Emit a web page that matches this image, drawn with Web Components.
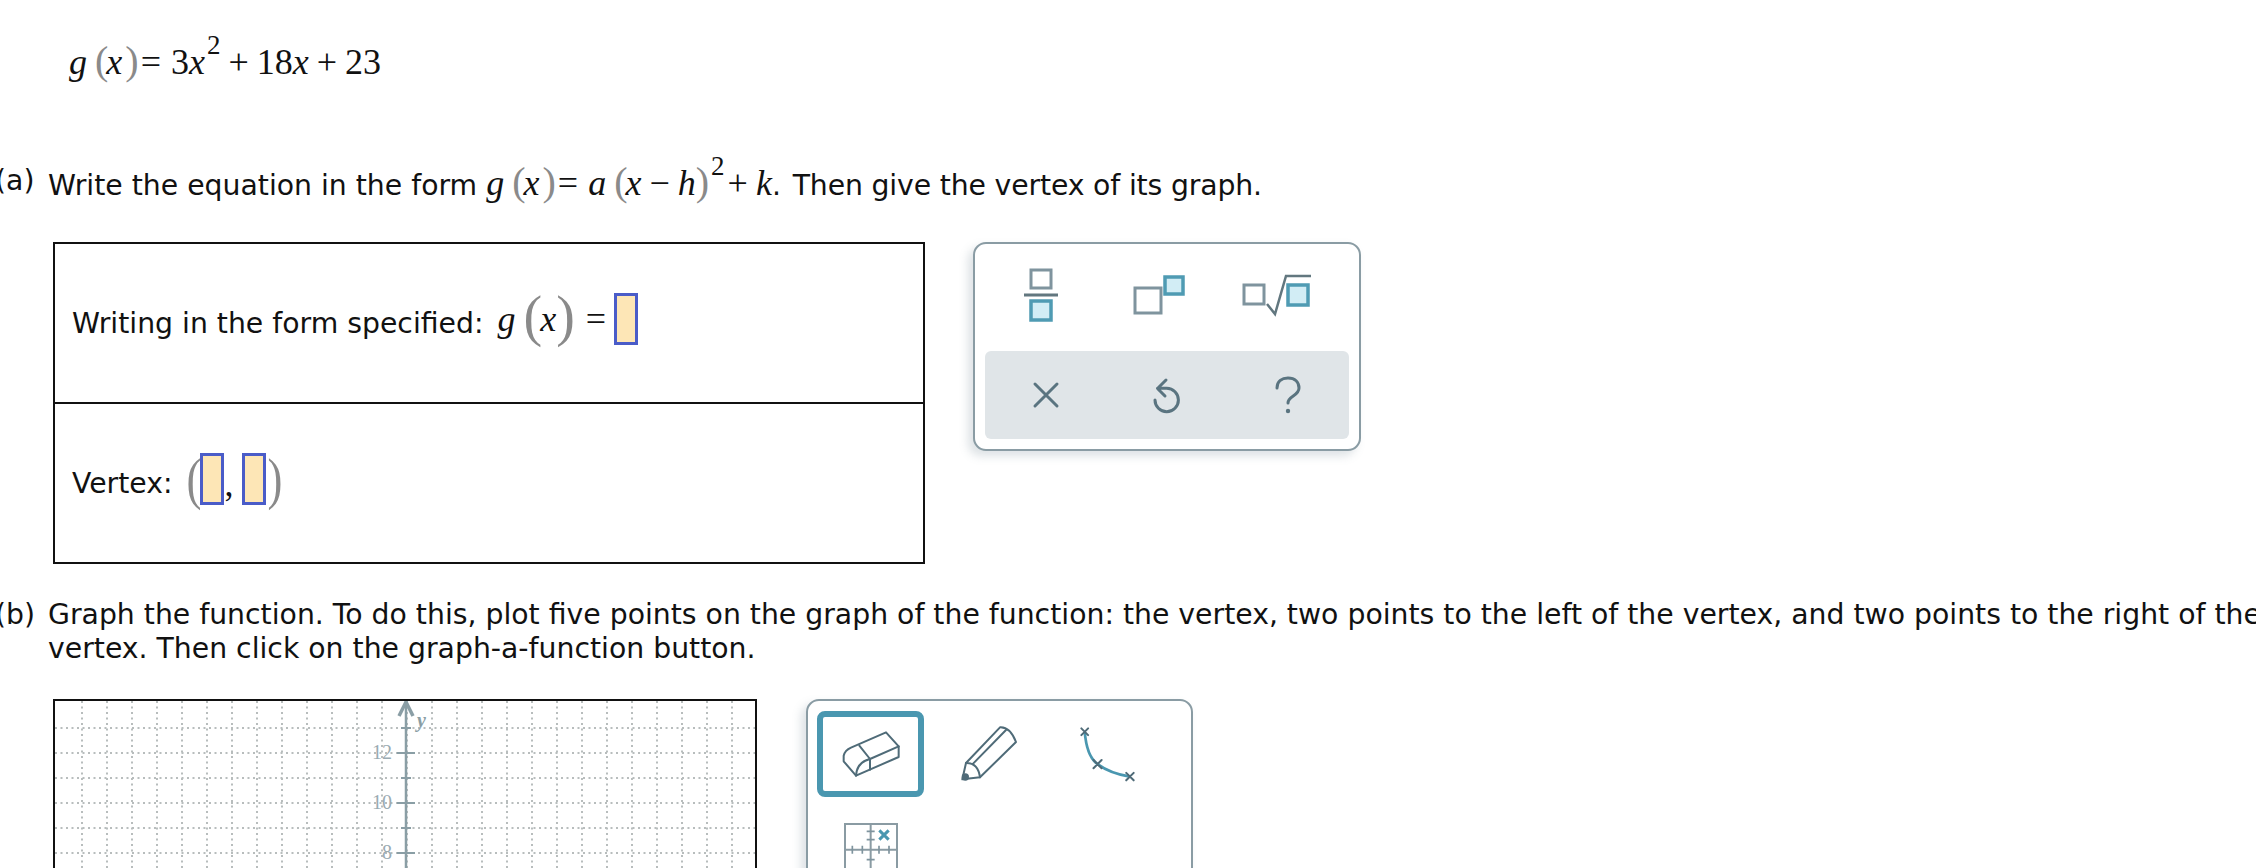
<!DOCTYPE html>
<html>
<head>
<meta charset="utf-8">
<title>Quadratic</title>
<style>
html,body{margin:0;padding:0;background:#fff;height:868px;overflow:hidden;}
</style>
</head>
<body>
<q-page></q-page>
<script>
// inline math, tokens are "kind:text" separated by spaces
class MathExpr extends HTMLElement {
    connectedCallback() {
        const root = this.attachShadow({ mode: 'open' });
        const spans = this.getAttribute('data').split(' ').map(t => {
            const [kind, text] = t.split(':');
            return `<span class="${kind}">${text}</span>`;
        }).join('');
        root.innerHTML = `
            <style>
                :host{display:inline-flex; align-items:baseline; font-family:"Liberation Serif",serif; font-size:36px; line-height:36px; color:#111; white-space:nowrap; --paren:40px; --close:3px; --eq:2px; --eq-r:10px; --drop:0px;}
                .i{font-style:italic;}
                .l,.r,.R{font-size:var(--paren); color:#8a8a8a; line-height:36px; position:relative; top:var(--drop);}
                .l{margin:0 -2px 0 8px;}
                .r{margin-left:var(--close);}
                .o{margin:0 8px;}
                .O{margin:0 8px 0 3px;}
                .e{margin:0 var(--eq-r) 0 var(--eq);}
                .s{font-size:27px; position:relative; top:-20px; margin-left:2px;}
            </style>${spans}`;
    }
}
customElements.define('math-expr', MathExpr);

class QPart extends HTMLElement {
    constructor() {
        super();
        this.attachShadow({ mode: 'open' }).innerHTML = `
            <style>
                :host{display:grid; grid-template-columns:53px 1fr; margin-left:-5px; font-family:"DejaVu Sans",Verdana,sans-serif; font-size:28.3px; line-height:34px; color:#111; white-space:nowrap;}
            </style>
            <div><slot name="label"></slot></div>
            <div><slot></slot></div>`;
    }
}
customElements.define('q-part', QPart);

class QBox extends HTMLElement {
    constructor() {
        super();
        this.attachShadow({ mode: 'open' }).innerHTML = `
            <style>
                :host{display:block; box-sizing:border-box; width:24px; height:52px; flex:none; background:#fde6b6; border:3px solid #4a5cc8;}
            </style>`;
    }
}
customElements.define('q-box', QBox);

class QTable extends HTMLElement {
    constructor() {
        super();
        this.attachShadow({ mode: 'open' }).innerHTML = `
            <style>
                :host{display:block; box-sizing:border-box; width:872px; flex:none; border:2px solid #111;}
            </style>
            <slot></slot>`;
    }
}
customElements.define('q-table', QTable);

class QRow extends HTMLElement {
    constructor() {
        super();
        this.attachShadow({ mode: 'open' }).innerHTML = `
            <style>
                :host{display:flex; align-items:center; box-sizing:border-box; height:158px; padding-left:17px; font-family:"DejaVu Sans",Verdana,sans-serif; font-size:28.3px; color:#111; white-space:nowrap;}
                :host([line]){border-top:2px solid #111; height:160px;}
            </style>
            <slot></slot>`;
    }
}
customElements.define('q-row', QRow);

class QPalette extends HTMLElement {
    constructor() {
        super();
        this.attachShadow({ mode: 'open' }).innerHTML = `
            <style>
                :host{display:block; box-sizing:border-box; width:388px; height:209px; flex:none; border:2px solid #8a9ca4; border-radius:13px; background:#fff; box-shadow:-5px 5px 10px rgba(100,125,135,.22); padding:0 10px;}
                .top{display:grid; grid-template-columns:repeat(3,118px); box-sizing:border-box; height:107px; padding-bottom:6px; margin-left:-3px; align-items:center; justify-items:center;}
                .bottom{display:grid; grid-template-columns:repeat(3,1fr); height:88px; background:#e0e5e8; border-radius:6px; align-items:center; justify-items:center;}
                svg{display:block; overflow:visible;}
                .g{fill:none; stroke:#7f949e; stroke-width:3;}
                .t{fill:#d2edf5; stroke:#4f9bb3; stroke-width:3.5;}
                .d{fill:none; stroke:#5a7480; stroke-width:3; stroke-linecap:round; stroke-linejoin:round;}
            </style>
            <div class="top">
                <svg width="36" height="54" viewBox="0 0 36 54">
                    <rect class="g" x="8" y="2" width="20" height="18"/>
                    <line x1="1" y1="27" x2="35" y2="27" stroke="#62777f" stroke-width="3"/>
                    <rect class="t" x="8" y="33" width="20" height="19"/>
                </svg>
                <svg width="52" height="40" viewBox="0 0 52 40">
                    <rect class="g" x="2" y="13" width="26" height="25"/>
                    <rect class="t" x="32" y="2" width="18" height="17"/>
                </svg>
                <svg width="70" height="42" viewBox="0 0 70 42">
                    <rect class="g" x="2" y="11" width="20" height="19"/>
                    <path d="M25 30 L33 40 L44 2 H69" fill="none" stroke="#62777f" stroke-width="2.5"/>
                    <rect class="t" x="46" y="11" width="20" height="20"/>
                </svg>
            </div>
            <div class="bottom">
                <svg width="26" height="26" viewBox="0 0 26 26"><path class="d" d="M2 2 L24 24 M24 2 L2 24"/></svg>
                <svg width="28" height="35" viewBox="13 13 28 35"><path class="d" d="M15 35 A11.7 11.7 0 1 0 26.7 23.3 L17.5 23.3 M26 15 L17.5 23.5 L25 31"/></svg>
                <svg width="26" height="38" viewBox="0 0 26 38">
                    <path class="d" d="M2 12 C2 5 7 2 13 2 C20 2 24 6 24 12 C24 20 13 20 13 27"/>
                    <circle cx="13" cy="35" r="2.2" fill="#5a7480"/>
                </svg>
            </div>`;
    }
}
customElements.define('q-palette', QPalette);

// graph canvas, lines are generated rather than written out
class QGraph extends HTMLElement {
    connectedCallback() {
        const xs = [], ys = [];
        for (let k = 0; k < 27; k++) xs.push(27 + k * 25);
        for (let k = 0; k < 27; k++) ys.push(27 + k * 25);
        const axis = xs[13] - 1;
        let grid = '';
        xs.forEach(x => { grid += `<line x1="${x}" y1="0" x2="${x}" y2="700"/>`; });
        ys.forEach(y => { grid += `<line x1="0" y1="${y}" x2="700" y2="${y}"/>`; });
        let ticks = '';
        ys.forEach((y, i) => {
            const a = i % 2 == 1 ? 9 : 5;
            ticks += `<line x1="${axis - a}" y1="${y}" x2="${axis + a}" y2="${y}"/>`;
        });
        const labels = [[51, 12], [101, 10], [151, 8]].map(([y, n]) =>
            `<text x="${axis - 14}" y="${y + 7}" text-anchor="end">${n}</text>`).join('');
        this.attachShadow({ mode: 'open' }).innerHTML = `
            <style>
                :host{display:block; box-sizing:border-box; width:704px; height:700px; flex:none; border:2px solid #111; border-bottom:none;}
                svg{display:block;}
                .grid line{stroke:#b8bdbd; stroke-width:2; stroke-dasharray:2 3.5;}
                .axis line,.axis path{stroke:#8a9ea5; fill:none;}
                .axis .tick line{stroke-width:2;}
                text{font-family:"Liberation Serif",serif; font-size:20px; fill:#9aabb2;}
                .y{font-style:italic; font-weight:bold; fill:#8a9ea5;}
            </style>
            <svg width="700" height="700" viewBox="0 0 700 700">
                <g class="grid">${grid}</g>
                <g class="axis">
                    <line x1="${axis}" y1="0" x2="${axis}" y2="700" stroke-width="2.5"/>
                    <path d="M${axis - 7} 15 L${axis} 1 L${axis + 7} 15" stroke-width="3.5"/>
                    <g class="tick">${ticks}</g>
                </g>
                ${labels}
                <text class="y" x="${axis + 11}" y="26">y</text>
            </svg>`;
    }
}
customElements.define('q-graph', QGraph);

class QTools extends HTMLElement {
    constructor() {
        super();
        this.attachShadow({ mode: 'open' }).innerHTML = `
            <style>
                :host{display:block; box-sizing:border-box; width:387px; height:400px; flex:none; border:2px solid #8a9ca4; border-radius:13px; background:#fff; box-shadow:-5px 5px 10px rgba(100,125,135,.22); padding:10px 0 0 9px;}
                .grid{display:grid; grid-template-columns:repeat(3,118px); grid-auto-rows:86px; row-gap:11px;}
                .cell{box-sizing:border-box; width:107px; height:86px; display:flex; align-items:center; justify-content:center;}
                .on{border:6px solid #4a97b0; border-radius:8px;}
                svg{display:block; overflow:visible;}
                .d{fill:none; stroke:#4f6b78; stroke-width:6; stroke-linejoin:round; stroke-linecap:round;}
            </style>
            <div class="grid">
                <div class="cell on">
                    <svg width="60" height="46" viewBox="162 134 176 138">
                        <path class="d" d="M168 208 Q172 192 190 184 L295 138 L333 180 L333 212 L205 268 L168 225 Z"/>
                        <path class="d" d="M215 178 L247 218 L333 180 M247 218 L247 250 M247 218 Q207 228 205 268"/>
                    </svg>
                </div>
                <div class="cell">
                    <svg width="56" height="56" viewBox="515 104 168 168">
                        <path class="d" d="M519 264 L530 215 L632 108 Q662 106 680 152 L572 258 Z"/>
                        <path class="d" d="M530 215 Q566 214 572 258 M552 216 L650 116"/>
                        <circle cx="528" cy="257" r="11" fill="#4f6b78"/>
                    </svg>
                </div>
                <div class="cell">
                    <svg width="54" height="54" viewBox="870 110 160 160">
                        <path d="M884 124 Q890 198 922 220 Q960 248 1018 257" fill="none" stroke="#4a97b0" stroke-width="8"/>
                        <path class="d" d="M874 114 L894 134 M894 114 L874 134 M910 208 L934 232 M934 208 L910 232 M1007 246 L1029 268 M1029 246 L1007 268"/>
                    </svg>
                </div>
                <div class="cell">
                    <svg width="54" height="56" viewBox="160 405 162 168">
                        <path d="M163 570 V408 H319 V570 Z M160 485 H322 M240 408 V570" fill="none" stroke="#8a9ba3" stroke-width="6"/>
                        <path d="M228 430 H252 M228 455 H252 M228 515 H252 M185 473 V497 M215 473 V497 M265 473 V497 M295 473 V497" fill="none" stroke="#7f949e" stroke-width="5"/>
                        <path d="M266 427 L294 455 M294 427 L266 455" fill="none" stroke="#4a97b0" stroke-width="9"/>
                    </svg>
                </div>
            </div>`;
    }
}
customElements.define('q-tools', QTools);

class QPage extends HTMLElement {
    constructor() {
        super();
        this.attachShadow({ mode: 'open' }).innerHTML = `
            <style>
                :host{display:block; width:2256px; height:868px; overflow:hidden; background:#fff;}
                .fn{padding:43px 0 0 69px; height:43px;}
                .a{margin-top:78px;}
                .tail{margin-left:3px; letter-spacing:-.15px;}
                .work{display:flex; gap:48px; margin:38px 0 0 53px;}
                .b{margin-top:34px;}
                .plot{display:flex; gap:49px; margin:33px 0 0 53px;}
                .row-math{margin:0 0 16px 14px; --paren:56px; --close:0px; --eq:11px; --eq-r:6px; --drop:4px;}
                .row-box{margin:0 0 8px 2px;}
                .v{display:flex; align-items:center; padding-bottom:8px; margin-left:12px; font-family:"Liberation Serif",serif; font-size:36px;}
                .v .par{font-size:56px; color:#8a8a8a; line-height:52px; width:15px; transform:scaleX(.8);}
                .v .c{width:17px; padding-left:1px; text-align:left; align-self:flex-end;}
            </style>
            <div class="fn"><math-expr data="i:g l:( i:x r:) e:= n:3 i:x s:2 o:+ n:18 i:x o:+ n:23"></math-expr></div>
            <q-part class="a"><span slot="label">(a)</span>Write the equation in the form <math-expr data="i:g l:( i:x r:) e:= i:a l:( i:x o:− i:h R:) s:2 O:+ i:k"></math-expr>.<span class="tail"> Then give the vertex of its graph.</span></q-part>
            <div class="work">
                <q-table>
                    <q-row>Writing in the form specified:<math-expr class="row-math" data="i:g l:( i:x r:) e:="></math-expr><q-box class="row-box"></q-box></q-row>
                    <q-row line>Vertex:<div class="v"><span class="par">(</span><q-box></q-box><span class="c">,</span><q-box></q-box><span class="par">)</span></div></q-row>
                </q-table>
                <q-palette></q-palette>
            </div>
            <q-part class="b"><span slot="label">(b)</span>Graph the function. To do this, plot five points on the graph of the function: the vertex, two points to the left of the vertex, and two points to the right of the<br>vertex. Then click on the graph-a-function button.</q-part>
            <div class="plot">
                <q-graph></q-graph>
                <q-tools></q-tools>
            </div>`;
    }
}
customElements.define('q-page', QPage);
</script>
</body>
</html>
